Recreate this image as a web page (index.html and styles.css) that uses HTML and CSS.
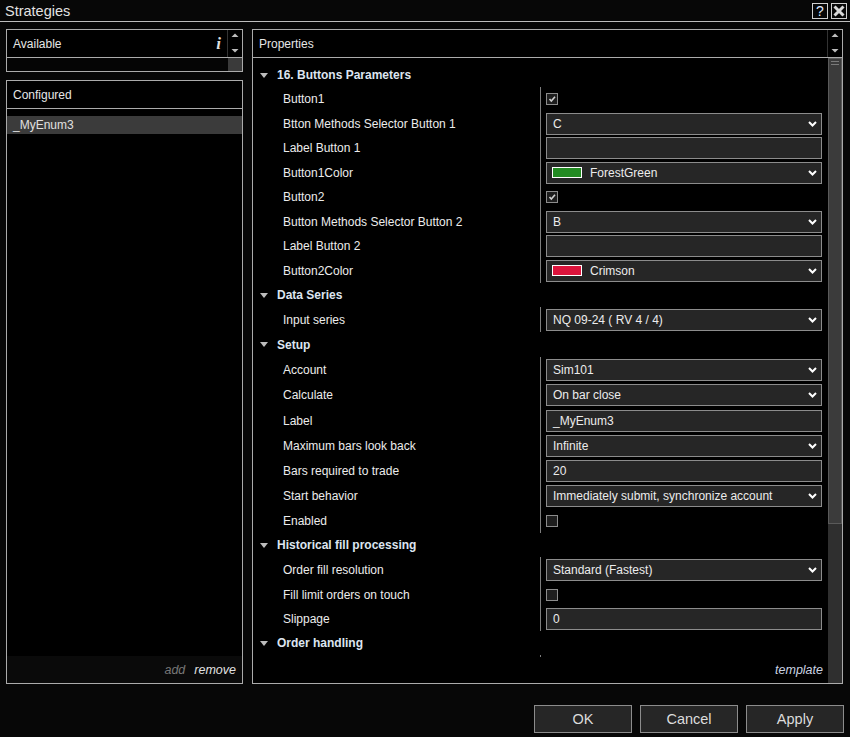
FILE: index.html
```html
<!DOCTYPE html>
<html>
<head>
<meta charset="utf-8">
<link rel="stylesheet" href="styles.css">
</head>
<body>
<div class="titlebar">
  <span class="title">Strategies</span>
  <div class="tb-btns">
    <div class="tb-btn help">?</div>
    <div class="tb-btn close"><svg width="14" height="14" viewBox="0 0 14 14"><path d="M2.5 2.5 L11.5 11.5 M11.5 2.5 L2.5 11.5" stroke="#d8d8d8" stroke-width="3" fill="none"/></svg></div>
  </div>
</div>
<div class="main">
  <div class="leftcol">
    <div class="box avail">
      <div class="bhead">
        <span class="htext">Available</span>
        <span class="info">i</span>
        <div class="arrows">
          <svg width="14" height="27" viewBox="0 0 14 27"><path d="M3.5 7 L10.5 7 L7 3.5 Z" fill="#bdbdbd"/><path d="M3.5 19 L10.5 19 L7 22.5 Z" fill="#bdbdbd"/></svg>
        </div>
      </div>
      <div class="alower"><div class="alist"></div><div class="athumb"></div></div>
    </div>
    <div class="box conf">
      <div class="bhead"><span class="htext">Configured</span></div>
      <div class="clist">
        <div class="citem">_MyEnum3</div>
      </div>
      <div class="cfoot"><span class="add">add</span><span class="remove">remove</span></div>
    </div>
  </div>
  <div class="box props">
    <div class="bhead">
      <span class="htext">Properties</span>
      <div class="arrows">
        <svg width="14" height="27" viewBox="0 0 14 27"><path d="M3.5 7 L10.5 7 L7 3.5 Z" fill="#bdbdbd"/><path d="M3.5 19 L10.5 19 L7 22.5 Z" fill="#bdbdbd"/></svg>
      </div>
    </div>
    <div class="pbody">
      <div class="pcontent">
        <div class="grid">
          <div class="row cat h24"><span class="tri"></span>16. Buttons Parameters</div>
          <div class="row h24"><div class="lbl">Button1</div><div class="val"><span class="chk"><svg width="10" height="10" viewBox="0 0 10 10"><path d="M2.5 5 L4.3 7 L8 2.8" stroke="#d0d0d0" stroke-width="1.6" fill="none"/></svg></span></div></div>
          <div class="row h25"><div class="lbl">Btton Methods Selector Button 1</div><div class="val"><div class="ctl">C<svg class="chev" width="9" height="6" viewBox="0 0 9 6"><path d="M1 1 L4.5 4.5 L8 1" stroke="#fff" stroke-width="2" fill="none"/></svg></div></div></div>
          <div class="row h24"><div class="lbl">Label Button 1</div><div class="val"><div class="ctl"></div></div></div>
          <div class="row h25"><div class="lbl">Button1Color</div><div class="val"><div class="ctl colr"><span class="sw green"></span>ForestGreen<svg class="chev" width="9" height="6" viewBox="0 0 9 6"><path d="M1 1 L4.5 4.5 L8 1" stroke="#fff" stroke-width="2" fill="none"/></svg></div></div></div>
          <div class="row h24"><div class="lbl">Button2</div><div class="val"><span class="chk"><svg width="10" height="10" viewBox="0 0 10 10"><path d="M2.5 5 L4.3 7 L8 2.8" stroke="#d0d0d0" stroke-width="1.6" fill="none"/></svg></span></div></div>
          <div class="row h25"><div class="lbl">Button Methods Selector Button 2</div><div class="val"><div class="ctl">B<svg class="chev" width="9" height="6" viewBox="0 0 9 6"><path d="M1 1 L4.5 4.5 L8 1" stroke="#fff" stroke-width="2" fill="none"/></svg></div></div></div>
          <div class="row h24"><div class="lbl">Label Button 2</div><div class="val"><div class="ctl"></div></div></div>
          <div class="row h25"><div class="lbl">Button2Color</div><div class="val"><div class="ctl colr"><span class="sw crimson"></span>Crimson<svg class="chev" width="9" height="6" viewBox="0 0 9 6"><path d="M1 1 L4.5 4.5 L8 1" stroke="#fff" stroke-width="2" fill="none"/></svg></div></div></div>
          <div class="row cat h24"><span class="tri"></span>Data Series</div>
          <div class="row h25"><div class="lbl">Input series</div><div class="val"><div class="ctl">NQ 09-24 ( RV 4 / 4)<svg class="chev" width="9" height="6" viewBox="0 0 9 6"><path d="M1 1 L4.5 4.5 L8 1" stroke="#fff" stroke-width="2" fill="none"/></svg></div></div></div>
          <div class="row cat h25"><span class="tri"></span>Setup</div>
          <div class="row h25"><div class="lbl">Account</div><div class="val"><div class="ctl">Sim101<svg class="chev" width="9" height="6" viewBox="0 0 9 6"><path d="M1 1 L4.5 4.5 L8 1" stroke="#fff" stroke-width="2" fill="none"/></svg></div></div></div>
          <div class="row h26"><div class="lbl">Calculate</div><div class="val"><div class="ctl">On bar close<svg class="chev" width="9" height="6" viewBox="0 0 9 6"><path d="M1 1 L4.5 4.5 L8 1" stroke="#fff" stroke-width="2" fill="none"/></svg></div></div></div>
          <div class="row h25"><div class="lbl">Label</div><div class="val"><div class="ctl">_MyEnum3</div></div></div>
          <div class="row h25"><div class="lbl">Maximum bars look back</div><div class="val"><div class="ctl">Infinite<svg class="chev" width="9" height="6" viewBox="0 0 9 6"><path d="M1 1 L4.5 4.5 L8 1" stroke="#fff" stroke-width="2" fill="none"/></svg></div></div></div>
          <div class="row h25"><div class="lbl">Bars required to trade</div><div class="val"><div class="ctl">20</div></div></div>
          <div class="row h25"><div class="lbl">Start behavior</div><div class="val"><div class="ctl">Immediately submit, synchronize account<svg class="chev" width="9" height="6" viewBox="0 0 9 6"><path d="M1 1 L4.5 4.5 L8 1" stroke="#fff" stroke-width="2" fill="none"/></svg></div></div></div>
          <div class="row h25"><div class="lbl">Enabled</div><div class="val"><span class="chk"></span></div></div>
          <div class="row cat h24"><span class="tri"></span>Historical fill processing</div>
          <div class="row h25"><div class="lbl">Order fill resolution</div><div class="val"><div class="ctl">Standard (Fastest)<svg class="chev" width="9" height="6" viewBox="0 0 9 6"><path d="M1 1 L4.5 4.5 L8 1" stroke="#fff" stroke-width="2" fill="none"/></svg></div></div></div>
          <div class="row h25"><div class="lbl">Fill limit orders on touch</div><div class="val"><span class="chk"></span></div></div>
          <div class="row h24"><div class="lbl">Slippage</div><div class="val"><div class="ctl">0</div></div></div>
          <div class="row cat h24"><span class="tri"></span>Order handling</div>
          <div class="row h25"><div class="lbl"></div><div class="val"></div></div>
        </div>
        <div class="pfoot">template</div>
      </div>
      <div class="vscroll"><div class="thumb"><span class="grip"></span><span class="grip"></span></div></div>
    </div>
  </div>
</div>
<div class="bottombar">
  <div class="btn">OK</div>
  <div class="btn">Cancel</div>
  <div class="btn">Apply</div>
</div>
</body>
</html>
```
FILE: styles.css
```css
html, body {
  margin: 0;
  padding: 0;
}
body {
  width: 850px;
  height: 737px;
  overflow: hidden;
  background: #070707;
  color: #e6e6e6;
  font-family: "Liberation Sans", Arial, sans-serif;
  font-size: 12px;
}
.titlebar {
  height: 21px;
  border-bottom: 1px solid #bdbdbd;
  display: flex;
  align-items: center;
  justify-content: space-between;
  padding: 0 3px 0 5px;
}
.title {
  font-size: 14.5px;
  color: #e2e2e2;
}
.tb-btns {
  display: flex;
  gap: 3px;
}
.tb-btn {
  width: 16px;
  height: 16px;
  box-sizing: border-box;
  border: 1px solid #cfcfcf;
  display: flex;
  align-items: center;
  justify-content: center;
}
.help {
  font-size: 14px;
  color: #dfe8ff;
  line-height: 14px;
}
.main {
  display: flex;
  gap: 9px;
  padding: 7px 7px 0 6px;
  height: 655px;
}
.leftcol {
  width: 237px;
  display: flex;
  flex-direction: column;
  gap: 8px;
}
.box {
  box-sizing: border-box;
  border: 1px solid #ababab;
  background: #000;
  display: flex;
  flex-direction: column;
}
.bhead {
  height: 27px;
  border-bottom: 1px solid #ababab;
  display: flex;
  align-items: center;
  flex-shrink: 0;
}
.htext {
  padding-left: 6px;
  font-size: 12px;
  color: #e6e6e6;
  flex: 1;
}
.info {
  font-family: "Liberation Serif", serif;
  font-style: italic;
  font-weight: bold;
  font-size: 17px;
  color: #dedede;
  margin-right: 6px;
}
.arrows {
  width: 14px;
  height: 27px;
  border-left: 1px solid #333;
  flex-shrink: 0;
}
.arrows svg {
  display: block;
}
.avail {
  height: 43px;
}
.alower {
  height: 13px;
  display: flex;
}
.alist {
  flex: 1;
  background: #050505;
}
.athumb {
  width: 14px;
  background: #3a3a3a;
}
.conf {
  flex: 1;
}
.clist {
  flex: 1;
  padding-top: 7px;
}
.citem {
  height: 18px;
  background: #3b3b3b;
  display: flex;
  align-items: center;
  padding-left: 6px;
  color: #e0e0e0;
}
.cfoot {
  height: 27px;
  background: #0a0a0a;
  display: flex;
  align-items: center;
  justify-content: flex-end;
  gap: 9px;
  padding-right: 6px;
  font-style: italic;
  font-size: 12.5px;
}
.add {
  color: #777;
}
.remove {
  color: #e2e2e2;
}
.props {
  width: 591px;
}
.pbody {
  flex: 1;
  display: flex;
  min-height: 0;
}
.pcontent {
  flex: 1;
  display: flex;
  flex-direction: column;
  min-width: 0;
}
.grid {
  flex: 1;
  overflow: hidden;
  padding-top: 5px;
}
.row {
  display: flex;
  flex-shrink: 0;
}
.h24 {
  height: 24px;
}
.h25 {
  height: 25px;
}
.h26 {
  height: 26px;
}
.row.cat {
  align-items: center;
  padding-left: 7px;
  font-weight: bold;
  color: #dde5f0;
}
.tri {
  width: 0;
  height: 0;
  border-left: 4px solid transparent;
  border-right: 4px solid transparent;
  border-top: 5px solid #bdbdbd;
  margin-right: 9px;
}
.lbl {
  width: 287px;
  flex-shrink: 0;
  box-sizing: border-box;
  padding-left: 30px;
  display: flex;
  align-items: center;
  white-space: nowrap;
  color: #ececec;
}
.val {
  flex: 1;
  border-left: 1px solid #7d7d7d;
  display: flex;
  align-items: center;
  padding-left: 5px;
}
.ctl {
  width: 276px;
  height: 22px;
  box-sizing: border-box;
  border: 1px solid #8c8c8c;
  background: #262626;
  display: flex;
  align-items: center;
  padding: 0 4px 0 6px;
  color: #ececec;
  white-space: nowrap;
}
.ctl.colr {
  padding-left: 5px;
}
.chev {
  margin-left: auto;
  flex-shrink: 0;
}
.sw {
  width: 30px;
  height: 11px;
  box-sizing: border-box;
  border: 1px solid #fff;
  margin-right: 8px;
}
.sw.green {
  background: #228b22;
}
.sw.crimson {
  background: #dc143c;
}
.chk {
  width: 12px;
  height: 12px;
  box-sizing: border-box;
  border: 1px solid #8c8c8c;
  background: #1e1e1e;
  display: flex;
  align-items: center;
  justify-content: center;
}
.chk svg {
  display: block;
}
.pfoot {
  height: 26px;
  flex-shrink: 0;
  display: flex;
  align-items: center;
  justify-content: flex-end;
  padding-right: 5px;
  font-style: italic;
  color: #cad3e2;
  font-size: 12.5px;
}
.vscroll {
  width: 14px;
  flex-shrink: 0;
  background: #2f2f2f;
}
.thumb {
  height: 466px;
  box-sizing: border-box;
  border: 1px solid #5a5a5a;
  background: #3b3b3b;
  display: flex;
  flex-direction: column;
  align-items: center;
  gap: 2px;
  padding-top: 2px;
}
.grip {
  width: 8px;
  height: 1px;
  background: #7a7a7a;
}
.bottombar {
  display: flex;
  justify-content: flex-end;
  gap: 8px;
  padding: 21px 6px 0 0;
}
.btn {
  width: 98px;
  height: 28px;
  box-sizing: border-box;
  border: 1px solid #8c8c8c;
  background: #262626;
  color: #dcdcdc;
  font-size: 14.5px;
  display: flex;
  align-items: center;
  justify-content: center;
}
```
